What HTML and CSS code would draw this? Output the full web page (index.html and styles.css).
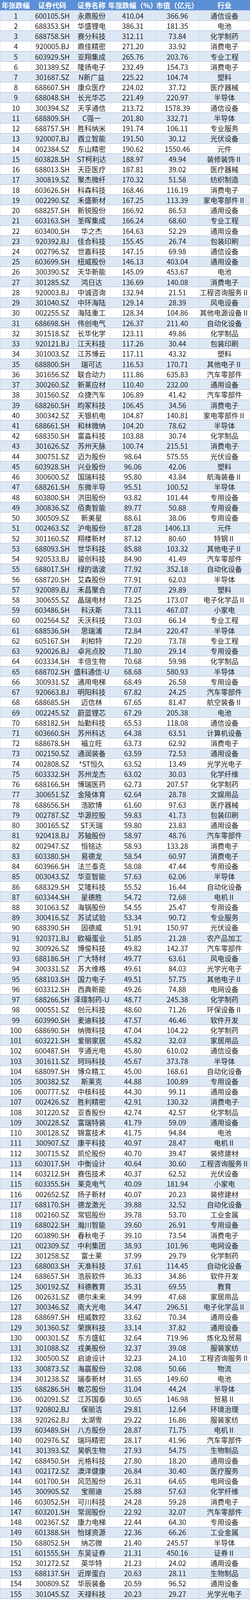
FILE: index.html
```html
<!DOCTYPE html>
<html lang="zh-CN">
<head>
<meta charset="utf-8">
<title>年涨跌幅排行</title>
<link rel="stylesheet" href="styles.css">
</head>
<body>
<div class="sheet">
<div class="row head"><span>年张跌幅</span><span>证券代码</span><span>证券名称</span><span>年涨跌幅（%）</span><span>市值（亿元）</span><span>行业</span></div>
<div class="body">
<div class="row"><span>1</span><span>600105.SH</span><span>永鼎股份</span><span>410.04</span><span>366.96</span><span>通信设备</span></div>
<div class="row"><span>2</span><span>688353.SH</span><span>华盛锂电</span><span>386.31</span><span>181.35</span><span>电池</span></div>
<div class="row"><span>3</span><span>688758.SH</span><span>赛分科技</span><span>312.11</span><span>73.84</span><span>化学制药</span></div>
<div class="row"><span>4</span><span>920005.BJ</span><span>鼎佳精密</span><span>271.20</span><span>33.92</span><span>消费电子</span></div>
<div class="row"><span>5</span><span>603929.SH</span><span>亚翔集成</span><span>265.76</span><span>203.76</span><span>专业工程</span></div>
<div class="row"><span>6</span><span>301389.SZ</span><span>隆扬电子</span><span>232.49</span><span>154.73</span><span>消费电子</span></div>
<div class="row"><span>7</span><span>301687.SZ</span><span>N新广益</span><span>225.22</span><span>104.74</span><span>塑料</span></div>
<div class="row"><span>8</span><span>688607.SH</span><span>康众医疗</span><span>224.02</span><span>37.72</span><span>医疗器械</span></div>
<div class="row"><span>9</span><span>688048.SH</span><span>长光华芯</span><span>221.49</span><span>220.97</span><span>半导体</span></div>
<div class="row"><span>10</span><span>300394.SZ</span><span>天孚通信</span><span>213.72</span><span>1578.39</span><span>通信设备</span></div>
<div class="row"><span>11</span><span>688809.SH</span><span>C强一</span><span>201.80</span><span>332.71</span><span>半导体</span></div>
<div class="row"><span>12</span><span>688757.SH</span><span>胜科纳米</span><span>191.74</span><span>106.11</span><span>专业服务</span></div>
<div class="row"><span>13</span><span>920007.BJ</span><span>酉立智能</span><span>191.50</span><span>30.12</span><span>光伏设备</span></div>
<div class="row"><span>14</span><span>002384.SZ</span><span>东山精密</span><span>190.62</span><span>1550.46</span><span>元件</span></div>
<div class="row"><span>15</span><span>603828.SH</span><span>ST柯利达</span><span>188.97</span><span>49.94</span><span>装修装饰Ⅱ</span></div>
<div class="row"><span>16</span><span>688013.SH</span><span>天臣医疗</span><span>187.81</span><span>39.02</span><span>医疗器械</span></div>
<div class="row"><span>17</span><span>300819.SZ</span><span>聚杰微纤</span><span>170.32</span><span>51.58</span><span>纺织制造</span></div>
<div class="row"><span>18</span><span>603626.SH</span><span>科森科技</span><span>168.46</span><span>116.19</span><span>消费电子</span></div>
<div class="row"><span>19</span><span>002290.SZ</span><span>禾盛新材</span><span>167.25</span><span>113.39</span><span>家电零部件Ⅱ</span></div>
<div class="row"><span>20</span><span>688257.SH</span><span>新锐股份</span><span>166.92</span><span>86.53</span><span>通用设备</span></div>
<div class="row"><span>21</span><span>603163.SH</span><span>圣晖集成</span><span>166.24</span><span>68.60</span><span>专业工程</span></div>
<div class="row"><span>22</span><span>603400.SH</span><span>华之杰</span><span>164.63</span><span>52.29</span><span>通用设备</span></div>
<div class="row"><span>23</span><span>920392.BJ</span><span>佳合科技</span><span>155.45</span><span>26.74</span><span>包装印刷</span></div>
<div class="row"><span>24</span><span>002796.SZ</span><span>世嘉科技</span><span>147.15</span><span>69.98</span><span>通信设备</span></div>
<div class="row"><span>25</span><span>603699.SH</span><span>纽威股份</span><span>146.13</span><span>403.04</span><span>通用设备</span></div>
<div class="row"><span>26</span><span>300390.SZ</span><span>天华新能</span><span>145.09</span><span>453.67</span><span>电池</span></div>
<div class="row"><span>27</span><span>301285.SZ</span><span>鸿日达</span><span>136.69</span><span>140.08</span><span>消费电子</span></div>
<div class="row"><span>28</span><span>920003.BJ</span><span>中诚咨询</span><span>132.94</span><span>21.51</span><span>工程咨询服务Ⅱ</span></div>
<div class="row"><span>29</span><span>301040.SZ</span><span>中环海陆</span><span>129.14</span><span>28.39</span><span>风电设备</span></div>
<div class="row"><span>30</span><span>002255.SZ</span><span>海陆重工</span><span>128.34</span><span>104.86</span><span>其他电源设备Ⅱ</span></div>
<div class="row"><span>31</span><span>688698.SH</span><span>伟创电气</span><span>126.37</span><span>211.40</span><span>自动化设备</span></div>
<div class="row"><span>32</span><span>301518.SZ</span><span>长华化学</span><span>123.11</span><span>49.86</span><span>化学制品</span></div>
<div class="row"><span>33</span><span>920121.BJ</span><span>江天科技</span><span>117.26</span><span>30.44</span><span>包装印刷</span></div>
<div class="row"><span>34</span><span>301003.SZ</span><span>江苏博云</span><span>117.11</span><span>43.32</span><span>塑料</span></div>
<div class="row"><span>35</span><span>688800.SH</span><span>瑞可达</span><span>116.53</span><span>170.71</span><span>其他电子Ⅱ</span></div>
<div class="row"><span>36</span><span>301656.SZ</span><span>联合动力</span><span>111.86</span><span>635.83</span><span>汽车零部件</span></div>
<div class="row"><span>37</span><span>300260.SZ</span><span>新莱应材</span><span>110.40</span><span>232.00</span><span>通用设备</span></div>
<div class="row"><span>38</span><span>301560.SZ</span><span>众捷汽车</span><span>106.89</span><span>41.42</span><span>汽车零部件</span></div>
<div class="row"><span>39</span><span>688260.SH</span><span>昀冢科技</span><span>106.45</span><span>34.56</span><span>消费电子</span></div>
<div class="row"><span>40</span><span>300342.SZ</span><span>天银机电</span><span>104.87</span><span>140.81</span><span>家电零部件Ⅱ</span></div>
<div class="row"><span>41</span><span>688661.SH</span><span>和林微纳</span><span>104.20</span><span>78.62</span><span>半导体</span></div>
<div class="row"><span>42</span><span>688350.SH</span><span>富淼科技</span><span>103.88</span><span>30.74</span><span>化学制品</span></div>
<div class="row"><span>43</span><span>301626.SZ</span><span>苏州天脉</span><span>100.74</span><span>215.51</span><span>消费电子</span></div>
<div class="row"><span>44</span><span>300751.SZ</span><span>迈为股份</span><span>98.64</span><span>575.55</span><span>光伏设备</span></div>
<div class="row"><span>45</span><span>603928.SH</span><span>兴业股份</span><span>96.06</span><span>42.06</span><span>塑料</span></div>
<div class="row"><span>46</span><span>300600.SZ</span><span>国瑞科技</span><span>95.80</span><span>43.84</span><span>航海装备Ⅱ</span></div>
<div class="row"><span>47</span><span>688261.SH</span><span>东微半导</span><span>95.51</span><span>100.52</span><span>半导体</span></div>
<div class="row"><span>48</span><span>603800.SH</span><span>洪田股份</span><span>93.82</span><span>101.44</span><span>专用设备</span></div>
<div class="row"><span>49</span><span>300836.SZ</span><span>佰奥智能</span><span>89.77</span><span>50.88</span><span>专用设备</span></div>
<div class="row"><span>50</span><span>300509.SZ</span><span>新美星</span><span>88.61</span><span>38.06</span><span>专用设备</span></div>
<div class="row"><span>51</span><span>002463.SZ</span><span>沪电股份</span><span>87.28</span><span>1406.13</span><span>元件</span></div>
<div class="row"><span>52</span><span>301160.SZ</span><span>翔楼新材</span><span>87.12</span><span>80.60</span><span>特钢Ⅱ</span></div>
<div class="row"><span>53</span><span>688093.SH</span><span>世华科技</span><span>85.88</span><span>103.32</span><span>其他电子Ⅱ</span></div>
<div class="row"><span>54</span><span>920533.BJ</span><span>骏创科技</span><span>84.90</span><span>41.49</span><span>汽车零部件</span></div>
<div class="row"><span>55</span><span>688017.SH</span><span>绿的谐波</span><span>77.92</span><span>352.18</span><span>自动化设备</span></div>
<div class="row"><span>56</span><span>688720.SH</span><span>艾森股份</span><span>77.91</span><span>62.03</span><span>半导体</span></div>
<div class="row"><span>57</span><span>920089.BJ</span><span>禾昌聚合</span><span>77.07</span><span>29.89</span><span>塑料</span></div>
<div class="row"><span>58</span><span>300655.SZ</span><span>晶瑞电材</span><span>73.25</span><span>173.07</span><span>电子化学品Ⅱ</span></div>
<div class="row"><span>59</span><span>603486.SH</span><span>科沃斯</span><span>73.11</span><span>467.07</span><span>小家电</span></div>
<div class="row"><span>60</span><span>002564.SZ</span><span>天沃科技</span><span>73.03</span><span>66.14</span><span>专业工程</span></div>
<div class="row"><span>61</span><span>688536.SH</span><span>思瑞浦</span><span>72.84</span><span>220.47</span><span>半导体</span></div>
<div class="row"><span>62</span><span>605167.SH</span><span>利柏特</span><span>72.20</span><span>73.78</span><span>专业工程</span></div>
<div class="row"><span>63</span><span>920026.BJ</span><span>卓兆点胶</span><span>71.80</span><span>29.14</span><span>专用设备</span></div>
<div class="row"><span>64</span><span>603334.SH</span><span>丰倍生物</span><span>70.68</span><span>59.98</span><span>化学制品</span></div>
<div class="row"><span>65</span><span>688702.SH</span><span>盛科通信-U</span><span>68.68</span><span>580.93</span><span>半导体</span></div>
<div class="row"><span>66</span><span>300931.SZ</span><span>通用电梯</span><span>68.49</span><span>26.58</span><span>专用设备</span></div>
<div class="row"><span>67</span><span>920663.BJ</span><span>明阳科技</span><span>67.82</span><span>24.25</span><span>汽车零部件</span></div>
<div class="row"><span>68</span><span>688685.SH</span><span>迈信林</span><span>67.65</span><span>81.47</span><span>航空装备Ⅱ</span></div>
<div class="row"><span>69</span><span>002245.SZ</span><span>蔚蓝锂芯</span><span>67.29</span><span>205.38</span><span>电池</span></div>
<div class="row"><span>70</span><span>688182.SH</span><span>灿勤科技</span><span>65.53</span><span>118.08</span><span>通信设备</span></div>
<div class="row"><span>71</span><span>603660.SH</span><span>苏州科达</span><span>64.38</span><span>63.51</span><span>计算机设备</span></div>
<div class="row"><span>72</span><span>688678.SH</span><span>福立旺</span><span>63.73</span><span>62.92</span><span>消费电子</span></div>
<div class="row"><span>73</span><span>002150.SZ</span><span>通润装备</span><span>63.59</span><span>72.53</span><span>通用设备</span></div>
<div class="row"><span>74</span><span>002808.SZ</span><span>*ST恒久</span><span>63.52</span><span>13.49</span><span>光学光电子</span></div>
<div class="row"><span>75</span><span>603332.SH</span><span>苏州龙杰</span><span>63.02</span><span>30.03</span><span>化学纤维</span></div>
<div class="row"><span>76</span><span>688166.SH</span><span>博瑞医药</span><span>62.73</span><span>207.57</span><span>化学制药</span></div>
<div class="row"><span>77</span><span>300651.SZ</span><span>金陵体育</span><span>62.64</span><span>28.78</span><span>文娱用品</span></div>
<div class="row"><span>78</span><span>688656.SH</span><span>浩欧博</span><span>61.60</span><span>97.63</span><span>医疗器械</span></div>
<div class="row"><span>79</span><span>002787.SZ</span><span>华源控股</span><span>59.83</span><span>41.73</span><span>包装印刷</span></div>
<div class="row"><span>80</span><span>300165.SZ</span><span>ST天瑞</span><span>59.80</span><span>23.83</span><span>通用设备</span></div>
<div class="row"><span>81</span><span>920418.BJ</span><span>苏轴股份</span><span>58.97</span><span>48.76</span><span>汽车零部件</span></div>
<div class="row"><span>82</span><span>002947.SZ</span><span>恒铭达</span><span>58.93</span><span>133.28</span><span>消费电子</span></div>
<div class="row"><span>83</span><span>603380.SH</span><span>易德龙</span><span>58.54</span><span>60.97</span><span>消费电子</span></div>
<div class="row"><span>84</span><span>603966.SH</span><span>法兰泰克</span><span>58.08</span><span>47.44</span><span>专用设备</span></div>
<div class="row"><span>85</span><span>003043.SZ</span><span>华亚智能</span><span>57.63</span><span>62.06</span><span>半导体</span></div>
<div class="row"><span>86</span><span>688329.SH</span><span>艾隆科技</span><span>55.52</span><span>16.44</span><span>自动化设备</span></div>
<div class="row"><span>87</span><span>603344.SH</span><span>星德胜</span><span>54.72</span><span>72.68</span><span>电机Ⅱ</span></div>
<div class="row"><span>88</span><span>301063.SZ</span><span>海锅股份</span><span>54.55</span><span>25.47</span><span>专用设备</span></div>
<div class="row"><span>89</span><span>300416.SZ</span><span>苏试试验</span><span>53.34</span><span>90.72</span><span>专业服务</span></div>
<div class="row"><span>90</span><span>688390.SH</span><span>固德威</span><span>51.91</span><span>150.97</span><span>光伏设备</span></div>
<div class="row"><span>91</span><span>920371.BJ</span><span>欧福蛋业</span><span>51.85</span><span>21.28</span><span>农产品加工</span></div>
<div class="row"><span>92</span><span>300926.SZ</span><span>博俊科技</span><span>49.82</span><span>142.37</span><span>汽车零部件</span></div>
<div class="row"><span>93</span><span>688186.SH</span><span>广大特材</span><span>49.77</span><span>63.61</span><span>风电设备</span></div>
<div class="row"><span>94</span><span>300331.SZ</span><span>苏大维格</span><span>49.61</span><span>84.03</span><span>光学光电子</span></div>
<div class="row"><span>95</span><span>688103.SH</span><span>国力电子</span><span>49.51</span><span>57.75</span><span>其他电子Ⅱ</span></div>
<div class="row"><span>96</span><span>603312.SH</span><span>西典新能</span><span>49.26</span><span>74.88</span><span>电网设备</span></div>
<div class="row"><span>97</span><span>688266.SH</span><span>泽璟制药-U</span><span>48.77</span><span>245.38</span><span>化学制药</span></div>
<div class="row"><span>98</span><span>000551.SZ</span><span>创元科技</span><span>48.60</span><span>71.26</span><span>环保设备Ⅱ</span></div>
<div class="row"><span>99</span><span>603990.SH</span><span>麦迪科技</span><span>47.57</span><span>46.46</span><span>软件开发</span></div>
<div class="row"><span>100</span><span>688690.SH</span><span>纳微科技</span><span>47.04</span><span>104.22</span><span>化学制药</span></div>
<div class="row"><span>101</span><span>603221.SH</span><span>爱丽家居</span><span>45.82</span><span>32.03</span><span>家居用品</span></div>
<div class="row"><span>102</span><span>600487.SH</span><span>亨通光电</span><span>45.80</span><span>610.02</span><span>通信设备</span></div>
<div class="row"><span>103</span><span>301611.SZ</span><span>珂玛科技</span><span>45.67</span><span>373.78</span><span>半导体</span></div>
<div class="row"><span>104</span><span>688097.SH</span><span>博众精工</span><span>45.00</span><span>168.61</span><span>自动化设备</span></div>
<div class="row"><span>105</span><span>300382.SZ</span><span>斯莱克</span><span>44.88</span><span>100.89</span><span>专用设备</span></div>
<div class="row"><span>106</span><span>000777.SZ</span><span>中核科技</span><span>44.30</span><span>99.11</span><span>通用设备</span></div>
<div class="row"><span>107</span><span>002426.SZ</span><span>胜利精密</span><span>42.91</span><span>130.32</span><span>消费电子</span></div>
<div class="row"><span>108</span><span>301220.SZ</span><span>亚香股份</span><span>42.74</span><span>42.57</span><span>化学制品</span></div>
<div class="row"><span>109</span><span>300228.SZ</span><span>富瑞特装</span><span>41.79</span><span>59.09</span><span>通用设备</span></div>
<div class="row"><span>110</span><span>300128.SZ</span><span>锦富技术</span><span>41.75</span><span>94.84</span><span>电池</span></div>
<div class="row"><span>111</span><span>300907.SZ</span><span>康平科技</span><span>40.97</span><span>28.47</span><span>电机Ⅱ</span></div>
<div class="row"><span>112</span><span>300715.SZ</span><span>凯伦股份</span><span>40.70</span><span>39.47</span><span>装修建材</span></div>
<div class="row"><span>113</span><span>603017.SH</span><span>中衡设计</span><span>40.64</span><span>30.60</span><span>工程咨询服务Ⅱ</span></div>
<div class="row"><span>114</span><span>603212.SH</span><span>赛伍技术</span><span>40.37</span><span>62.52</span><span>光伏设备</span></div>
<div class="row"><span>115</span><span>603355.SH</span><span>莱克电气</span><span>40.09</span><span>181.94</span><span>小家电</span></div>
<div class="row"><span>116</span><span>002652.SZ</span><span>扬子新材</span><span>40.07</span><span>20.23</span><span>装修建材</span></div>
<div class="row"><span>117</span><span>688170.SH</span><span>德龙激光</span><span>39.88</span><span>32.52</span><span>自动化设备</span></div>
<div class="row"><span>118</span><span>002160.SZ</span><span>常铝股份</span><span>39.78</span><span>53.70</span><span>工业金属</span></div>
<div class="row"><span>119</span><span>688022.SH</span><span>瀚川智能</span><span>39.60</span><span>26.91</span><span>专用设备</span></div>
<div class="row"><span>120</span><span>603890.SH</span><span>春秋电子</span><span>39.10</span><span>73.54</span><span>消费电子</span></div>
<div class="row"><span>121</span><span>002309.SZ</span><span>中利集团</span><span>38.93</span><span>101.96</span><span>电网设备</span></div>
<div class="row"><span>122</span><span>301258.SZ</span><span>富士莱</span><span>37.99</span><span>29.79</span><span>化学制药</span></div>
<div class="row"><span>123</span><span>688003.SH</span><span>天准科技</span><span>37.61</span><span>114.45</span><span>自动化设备</span></div>
<div class="row"><span>124</span><span>688657.SH</span><span>浩辰软件</span><span>36.33</span><span>34.86</span><span>软件开发</span></div>
<div class="row"><span>125</span><span>300192.SZ</span><span>科德教育</span><span>35.31</span><span>69.55</span><span>教育</span></div>
<div class="row"><span>126</span><span>002631.SZ</span><span>德尔未来</span><span>34.99</span><span>47.68</span><span>家居用品</span></div>
<div class="row"><span>127</span><span>300346.SZ</span><span>南大光电</span><span>34.47</span><span>296.51</span><span>电子化学品Ⅱ</span></div>
<div class="row"><span>128</span><span>688697.SH</span><span>纽威数控</span><span>33.62</span><span>70.34</span><span>通用设备</span></div>
<div class="row"><span>129</span><span>301360.SZ</span><span>荣旗科技</span><span>33.14</span><span>37.82</span><span>通用设备</span></div>
<div class="row"><span>130</span><span>000301.SZ</span><span>东方盛虹</span><span>32.64</span><span>719.96</span><span>炼化及贸易</span></div>
<div class="row"><span>131</span><span>301088.SZ</span><span>戎美股份</span><span>32.37</span><span>39.08</span><span>服装家纺</span></div>
<div class="row"><span>132</span><span>300500.SZ</span><span>启迪设计</span><span>32.23</span><span>24.10</span><span>工程咨询服务Ⅱ</span></div>
<div class="row"><span>133</span><span>300873.SZ</span><span>海晨股份</span><span>32.08</span><span>50.66</span><span>物流</span></div>
<div class="row"><span>134</span><span>301238.SZ</span><span>瑞泰新材</span><span>31.65</span><span>149.60</span><span>电池</span></div>
<div class="row"><span>135</span><span>688286.SH</span><span>敏芯股份</span><span>31.04</span><span>44.24</span><span>半导体</span></div>
<div class="row"><span>136</span><span>002091.SZ</span><span>江苏国泰</span><span>30.65</span><span>146.98</span><span>贸易Ⅱ</span></div>
<div class="row"><span>137</span><span>920802.BJ</span><span>保丽洁</span><span>29.81</span><span>12.64</span><span>环境治理</span></div>
<div class="row"><span>138</span><span>920262.BJ</span><span>太湖雪</span><span>29.22</span><span>16.86</span><span>服装家纺</span></div>
<div class="row"><span>139</span><span>603489.SH</span><span>八方股份</span><span>28.87</span><span>71.75</span><span>电机Ⅱ</span></div>
<div class="row"><span>140</span><span>002976.SZ</span><span>瑞玛精密</span><span>28.17</span><span>41.96</span><span>汽车零部件</span></div>
<div class="row"><span>141</span><span>301393.SZ</span><span>昊帆生物</span><span>27.93</span><span>54.75</span><span>生物制品</span></div>
<div class="row"><span>142</span><span>688450.SH</span><span>光格科技</span><span>27.80</span><span>18.20</span><span>通用设备</span></div>
<div class="row"><span>143</span><span>002172.SZ</span><span>澳洋健康</span><span>26.84</span><span>30.40</span><span>医疗服务</span></div>
<div class="row"><span>144</span><span>601700.SH</span><span>风范股份</span><span>26.31</span><span>64.65</span><span>电网设备</span></div>
<div class="row"><span>145</span><span>300905.SZ</span><span>宝丽迪</span><span>25.88</span><span>57.63</span><span>化学纤维</span></div>
<div class="row"><span>146</span><span>603052.SH</span><span>可川科技</span><span>24.28</span><span>59.28</span><span>消费电子</span></div>
<div class="row"><span>147</span><span>603201.SH</span><span>常润股份</span><span>22.92</span><span>32.07</span><span>汽车零部件</span></div>
<div class="row"><span>148</span><span>002367.SZ</span><span>康力电梯</span><span>22.44</span><span>64.30</span><span>专用设备</span></div>
<div class="row"><span>149</span><span>601388.SH</span><span>怡球资源</span><span>22.36</span><span>66.26</span><span>工业金属</span></div>
<div class="row"><span>150</span><span>688052.SH</span><span>纳芯微</span><span>21.40</span><span>245.57</span><span>半导体</span></div>
<div class="row"><span>151</span><span>601555.SH</span><span>东吴证券</span><span>21.31</span><span>450.16</span><span>证券Ⅱ</span></div>
<div class="row"><span>152</span><span>301272.SZ</span><span>英华特</span><span>21.23</span><span>24.02</span><span>通用设备</span></div>
<div class="row"><span>153</span><span>688137.SH</span><span>近岸蛋白</span><span>20.63</span><span>28.11</span><span>生物制品</span></div>
<div class="row"><span>154</span><span>300809.SZ</span><span>华辰装备</span><span>20.59</span><span>96.52</span><span>通用设备</span></div>
<div class="row"><span>155</span><span>301045.SZ</span><span>天禄科技</span><span>20.23</span><span>29.27</span><span>光学光电子</span></div>
<div class="row"><span>156</span><span>688700.SH</span><span>东威科技</span><span>20.07</span><span>105.28</span><span>专用设备</span></div>
<div class="row"><span>157</span><span>688472.SH</span><span>阿特斯</span><span>19.89</span><span>543.19</span><span>光伏设备</span></div>
<div class="row"><span>158</span><span>688259.SH</span><span>创耀科技</span><span>19.67</span><span>46.69</span><span>半导体</span></div>
<div class="row"><span>159</span><span>601512.SH</span><span>中新集团</span><span>19.29</span><span>134.90</span><span>房地产开发</span></div>
<div class="row"><span>160</span><span>301505.SZ</span><span>苏州规划</span><span>18.57</span><span>25.48</span><span>工程咨询服务Ⅱ</span></div>
<div class="row"><span>161</span><span>300141.SZ</span><span>和顺电气</span><span>18.14</span><span>32.41</span><span>电网设备</span></div>
<div class="row"><span>162</span><span>688030.SH</span><span>山石网科</span><span>17.23</span><span>32.75</span><span>软件开发</span></div>
<div class="row"><span>163</span><span>002491.SZ</span><span>通鼎互联</span><span>16.73</span><span>73.80</span><span>通信设备</span></div>
<div class="row"><span>164</span><span>688106.SH</span><span>金宏气体</span><span>15.81</span><span>94.42</span><span>电子化学品Ⅱ</span></div>
<div class="row"><span>165</span><span>300549.SZ</span><span>优德精密</span><span>15.47</span><span>25.15</span><span>专用设备</span></div>
<div class="row"><span>166</span><span>300240.SZ</span><span>飞力达</span><span>14.76</span><span>28.02</span><span>物流</span></div>
<div class="row"><span>167</span><span>002547.SZ</span><span>春兴精工</span><span>14.18</span><span>52.68</span><span>汽车零部件</span></div>
<div class="row"><span>168</span><span>301386.SZ</span><span>未来电器</span><span>14.07</span><span>32.90</span><span>电网设备</span></div>
<div class="row"><span>169</span><span>301329.SZ</span><span>信音电子</span><span>13.97</span><span>40.07</span><span>消费电子</span></div>
<div class="row"><span>170</span><span>301187.SZ</span><span>欧圣电气</span><span>12.55</span><span>68.60</span><span>小家电</span></div>
<div class="row"><span>171</span><span>603183.SH</span><span>建研院</span><span>12.51</span><span>21.43</span><span>专业服务</span></div>
<div class="row"><span>172</span><span>002839.SZ</span><span>张家港行</span><span>12.04</span><span>111.71</span><span>农商行Ⅱ</span></div>
<div class="row"><span>173</span><span>688001.SH</span><span>华兴源创</span><span>11.37</span><span>134.42</span><span>通用设备</span></div>
<div class="row"><span>174</span><span>688218.SH</span><span>江苏北人</span><span>11.16</span><span>27.06</span><span>自动化设备</span></div>
<div class="row"><span>175</span><span>003015.SZ</span><span>日久光电</span><span>10.55</span><span>43.85</span><span>光学光电子</span></div>
<div class="row"><span>176</span><span>603035.SH</span><span>常熟汽饰</span><span>10.34</span><span>56.67</span><span>汽车零部件</span></div>
<div class="row"><span>177</span><span>603323.SH</span><span>苏农银行</span><span>10.07</span><span>101.94</span><span>农商行Ⅱ</span></div>
<div class="row"><span>178</span><span>688262.SH</span><span>国芯科技</span><span>9.57</span><span>101.98</span><span>半导体</span></div>
<div class="row"><span>179</span><span>301418.SZ</span><span>协昌科技</span><span>9.45</span><span>26.77</span><span>自动化设备</span></div>
<div class="row"><span>180</span><span>002333.SZ</span><span>罗普斯金</span><span>9.33</span><span>37.93</span><span>装修建材</span></div>
<div class="row"><span>181</span><span>600736.SH</span><span>苏州高新</span><span>9.25</span><span>77.83</span><span>房地产开发</span></div>
<div class="row"><span>182</span><span>002519.SZ</span><span>银河电子</span><span>9.09</span><span>72.99</span><span>地面兵装Ⅱ</span></div>
<div class="row"><span>183</span><span>688355.SH</span><span>明志科技</span><span>9.02</span><span>22.06</span><span>通用设备</span></div>
<div class="row"><span>184</span><span>301266.SZ</span><span>宇邦新材</span><span>8.86</span><span>39.98</span><span>光伏设备</span></div>
<div class="row"><span>185</span><span>920060.BJ</span><span>万源通</span><span>8.86</span><span>49.99</span><span>元件</span></div>
<div class="row"><span>186</span><span>600794.SH</span><span>保税科技</span><span>8.12</span><span>46.81</span><span>物流</span></div>
<div class="row"><span>187</span><span>301180.SZ</span><span>万祥科技</span><span>7.95</span><span>66.80</span><span>消费电子</span></div>
<div class="row"><span>188</span><span>601128.SH</span><span>常熟银行</span><span>7.66</span><span>233.48</span><span>农商行Ⅱ</span></div>
<div class="row"><span>189</span><span>300215.SZ</span><span>电科院</span><span>7.25</span><span>47.64</span><span>专业服务</span></div>
<div class="row"><span>190</span><span>002966.SZ</span><span>苏州银行</span><span>7.25</span><span>370.62</span><span>城商行Ⅱ</span></div>
<div class="row"><span>191</span><span>300393.SZ</span><span>中来股份</span><span>7.20</span><span>73.01</span><span>光伏设备</span></div>
<div class="row"><span>192</span><span>688693.SH</span><span>锴威特</span><span>6.55</span><span>27.59</span><span>半导体</span></div>
<div class="row"><span>193</span><span>688588.SH</span><span>凌志软件</span><span>5.03</span><span>57.24</span><span>软件开发</span></div>
<div class="row"><span>194</span><span>605089.SH</span><span>味知香</span><span>3.59</span><span>35.13</span><span>食品加工</span></div>
<div class="row"><span>195</span><span>688515.SH</span><span>裕太微-U</span><span>3.59</span><span>82.04</span><span>半导体</span></div>
<div class="row"><span>196</span><span>300757.SZ</span><span>罗博特科</span><span>3.56</span><span>391.03</span><span>自动化设备</span></div>
<div class="row"><span>197</span><span>300708.SZ</span><span>聚灿光电</span><span>2.73</span><span>83.38</span><span>光学光电子</span></div>
<div class="row"><span>198</span><span>300522.SZ</span><span>世名科技</span><span>1.84</span><span>40.56</span><span>化学制品</span></div>
<div class="row"><span>199</span><span>920149.BJ</span><span>旭杰科技</span><span>0.52</span><span>8.85</span><span>工程咨询服务Ⅱ</span></div>
<div class="row"><span>200</span><span>600527.SH</span><span>江南高纤</span><span>-0.44</span><span>37.23</span><span>纺织制造</span></div>
<div class="row"><span>201</span><span>002081.SZ</span><span>金 螳 螂</span><span>-1.42</span><span>90.81</span><span>装修装饰Ⅱ</span></div>
<div class="row"><span>202</span><span>300261.SZ</span><span>雅本化学</span><span>-1.75</span><span>64.83</span><span>农化制品</span></div>
<div class="row"><span>203</span><span>603005.SH</span><span>晶方科技</span><span>-1.81</span><span>180.39</span><span>半导体</span></div>
<div class="row"><span>204</span><span>301278.SZ</span><span>快可电子</span><span>-2.82</span><span>29.99</span><span>光伏设备</span></div>
<div class="row"><span>205</span><span>688337.SH</span><span>普源精电</span><span>-4.30</span><span>71.52</span><span>通用设备</span></div>
<div class="row"><span>206</span><span>300211.SZ</span><span>*ST亿通</span><span>-4.83</span><span>25.74</span><span>通信服务</span></div>
<div class="row"><span>207</span><span>002079.SZ</span><span>苏州固锝</span><span>-6.81</span><span>77.41</span><span>电池</span></div>
<div class="row"><span>208</span><span>300292.SZ</span><span>吴通控股</span><span>-7.01</span><span>60.51</span><span>通信服务</span></div>
<div class="row"><span>209</span><span>002075.SZ</span><span>沙钢股份</span><span>-7.49</span><span>126.14</span><span>特钢Ⅱ</span></div>
<div class="row"><span>210</span><span>605333.SH</span><span>沪光股份</span><span>-7.82</span><span>138.42</span><span>汽车零部件</span></div>
<div class="row"><span>211</span><span>920167.BJ</span><span>同享科技</span><span>-10.47</span><span>18.77</span><span>光伏设备</span></div>
<div class="row"><span>212</span><span>603283.SH</span><span>赛腾股份</span><span>-11.63</span><span>117.47</span><span>自动化设备</span></div>
<div class="row"><span>213</span><span>002635.SZ</span><span>安洁科技</span><span>-11.65</span><span>91.43</span><span>消费电子</span></div>
<div class="row"><span>214</span><span>301202.SZ</span><span>朗威股份</span><span>-12.25</span><span>55.11</span><span>通信设备</span></div>
<div class="row"><span>215</span><span>688055.SH</span><span>龙腾光电</span><span>-12.83</span><span>120.00</span><span>光学光电子</span></div>
<div class="row"><span>216</span><span>002531.SZ</span><span>天顺风能</span><span>-13.01</span><span>123.27</span><span>风电设备</span></div>
<div class="row"><span>217</span><span>605300.SH</span><span>佳禾食品</span><span>-13.32</span><span>52.71</span><span>饮料乳品</span></div>
<div class="row"><span>218</span><span>688232.SH</span><span>新点软件</span><span>-13.40</span><span>79.92</span><span>软件开发</span></div>
<div class="row"><span>219</span><span>688533.SH</span><span>上声电子</span><span>-14.49</span><span>47.62</span><span>汽车零部件</span></div>
<div class="row"><span>220</span><span>002221.SZ</span><span>东华能源</span><span>-14.65</span><span>127.67</span><span>炼化及贸易</span></div>
<div class="row"><span>221</span><span>002387.SZ</span><span>维信诺</span><span>-16.15</span><span>120.40</span><span>光学光电子</span></div>
<div class="row"><span>222</span><span>603922.SH</span><span>金鸿顺</span><span>-16.76</span><span>37.20</span><span>汽车零部件</span></div>
<div class="row"><span>223</span><span>002127.SZ</span><span>南极电商</span><span>-22.69</span><span>82.73</span><span>互联网电商</span></div>
<div class="row"><span>224</span><span>002274.SZ</span><span>华昌化工</span><span>-24.19</span><span>53.81</span><span>化学原料</span></div>
<div class="row"><span>225</span><span>603958.SH</span><span>哈森股份</span><span>-25.24</span><span>29.17</span><span>服装家纺</span></div>
<div class="row"><span>226</span><span>605218.SH</span><span>伟时电子</span><span>-30.65</span><span>39.27</span><span>光学光电子</span></div>
<div class="row"><span>227</span><span>688496.SH</span><span>清越科技</span><span>-30.69</span><span>26.73</span><span>光学光电子</span></div>
<div class="row"><span>228</span><span>688408.SH</span><span>中信博</span><span>-40.26</span><span>92.25</span><span>光伏设备</span></div>
<div class="row"><span>229</span><span>301030.SZ</span><span>仕净科技</span><span>-50.99</span><span>23.94</span><span>环保设备Ⅱ</span></div>
</div>
<div class="watermark">@雪球：苏州资讯</div>
</div>
</body>
</html>
```

FILE: styles.css
```css
html, body {
  margin: 0;
  padding: 0;
  background: #ffffff;
}

.sheet {
  position: relative;
  width: 640px;
  height: 6035px;
  overflow: hidden;
  font-family: "Noto Sans CJK SC", "Noto Sans", sans-serif;
  font-size: 18px;
  color: #1e1e1e;
}

.row {
  display: grid;
  grid-template-columns: 80px 107px 94px 117px 111px 131px;
  height: 26.24px;
  box-sizing: border-box;
  border-top: 1px solid #aab8cc;
  overflow: hidden;
}

.row > span {
  display: flex;
  align-items: center;
  justify-content: center;
  white-space: nowrap;
  line-height: 20px;
  border-left: 1px solid #d6dbe2;
}

.row > span:last-child {
  border-right: 1px solid #d6dbe2;
}

.head {
  height: 26px;
  border-top: none;
  background: #5b90d6;
  color: #ffffff;
  font-weight: 700;
}

.head > span,
.head > span:last-child {
  border-left: none;
  border-right: none;
}

.body .row:nth-child(odd) {
  background: #dde8f5;
}

.body .row:nth-child(even) {
  background: #ffffff;
}

.watermark {
  position: absolute;
  left: 448px;
  top: 5992px;
  font-size: 20px;
  line-height: 28px;
  color: rgba(120, 130, 140, 0.28);
  white-space: nowrap;
  pointer-events: none;
}
```
